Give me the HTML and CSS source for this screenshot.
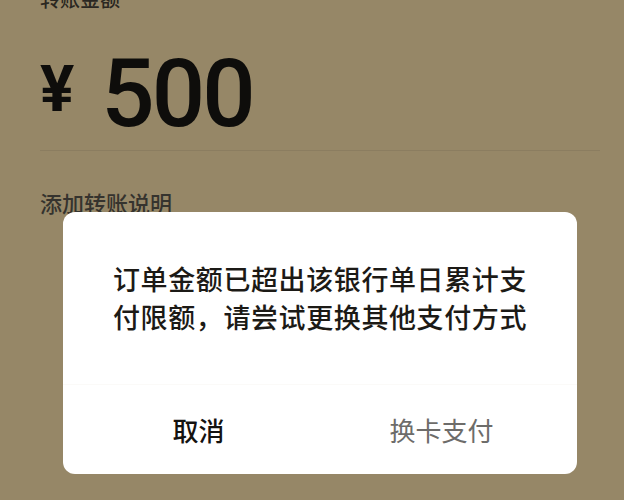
FILE: index.html
```html
<!DOCTYPE html>
<html lang="zh-CN">
  <head>
    <meta charset="UTF-8" />
    <meta name="viewport" content="width=device-width, initial-scale=1" />
    <title>转账</title>
    <link rel="stylesheet" href="styles.css">
  </head>
  <body>
    <!-- Transfer form (behind the dialog) -->
    <div class="transfer">
      <div class="transfer-label">转账金额</div>
      <div class="amount">
        <span class="amount-currency">¥</span>
        <span class="amount-value">500</span>
      </div>
      <div class="transfer-note">添加转账说明</div>
    </div>

    <!-- Limit dialog -->
    <div class="dialog">
      <p class="dialog-message">订单金额已超出该银行单日累计支付限额，请尝试更换其他支付方式</p>
      <div class="dialog-actions">
        <button class="dialog-btn dialog-btn-cancel">取消</button>
        <button class="dialog-btn dialog-btn-switch">换卡支付</button>
      </div>
    </div>
  </body>
</html>
```

FILE: styles.css
```css
/* Basic Reset */
* {
  margin: 0;
  padding: 0;
  box-sizing: border-box;
}

body {
  font-family: "Noto Sans CJK SC", "Noto Sans", sans-serif;
  background-color: #968767; /* dimmed page */
  color: #1c1a16;
  overflow: hidden;
  height: 500px;
  position: relative;
}

/* Transfer form */
.transfer {
  padding: 0 24px 0 40px;
}

.transfer-label {
  margin-top: -13px;
  font-size: 20px;
  line-height: 24px;
  font-weight: 500;
  color: #2a2721;
}

.amount {
  display: flex;
  align-items: flex-start;
  margin-top: 36px;
  padding-bottom: 9px;
  border-bottom: 1px solid #8b7d60;
  font-family: Roboto, "Liberation Sans", sans-serif;
  color: #0e0d0b;
  line-height: 1;
}

.amount-currency {
  font-size: 64px;
  font-weight: 700;
  margin-top: 11px;
  margin-right: 27px;
}

.amount-value {
  font-size: 94px;
  font-weight: 500;
  letter-spacing: -3px;
}

.transfer-note {
  margin-top: 37px;
  font-size: 22px;
  line-height: 28px;
  font-weight: 500;
  color: #35332e;
}

/* Dialog */
.dialog {
  position: absolute;
  left: 63px;
  top: 212px;
  width: 514px;
  height: 262px;
  background-color: #fff;
  border-radius: 12px;
  display: flex;
  flex-direction: column;
}

.dialog-message {
  padding: 48px 42px 0;
  font-size: 27px;
  line-height: 38px;
  letter-spacing: 0.6px;
  font-weight: 500;
  text-align: center;
  flex: 1;
}

.dialog-actions {
  display: flex;
  height: 90px;
  padding: 0 14px;
  border-top: 1px solid #fbfaf8;
}

.dialog-btn {
  flex: 1;
  border: none;
  background: none;
  font-family: inherit;
  font-size: 26px;
}

.dialog-btn-cancel {
  color: #141210;
  font-weight: 500;
}

.dialog-btn-switch {
  color: #6d6c6a;
}
```
